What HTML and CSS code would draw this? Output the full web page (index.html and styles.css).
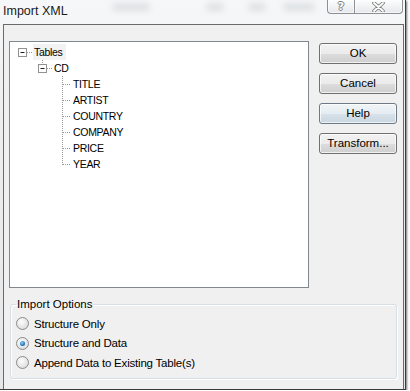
FILE: index.html
```html
<!DOCTYPE html>
<html lang="en">
  <head>
    <meta charset="UTF-8" />
    <title>Import XML</title>
    <link rel="stylesheet" href="styles.css">
  </head>
  <body>
    <div class="window">
      <div class="titlebar">
        <span class="title">Import XML</span>
        <span class="smudge s1"></span>
        <span class="smudge s2"></span>
        <span class="smudge s3"></span>
        <span class="smudge s4"></span>
        <div class="caption">
          <span class="cap cap-help">?</span>
          <span class="cap cap-close">
            <svg width="13" height="10" viewBox="0 0 13 10">
              <path d="M2 1 L11 9 M11 1 L2 9" stroke="#7d7d7d" stroke-width="3.6" stroke-linecap="round" />
              <path d="M2 1 L11 9 M11 1 L2 9" stroke="#fff" stroke-width="1.8" stroke-linecap="round" />
            </svg>
          </span>
        </div>
      </div>
      <div class="client">
        <div class="top">
          <div class="tree">
            <div class="node node-root">
              <svg width="23" height="16">
                <rect x="8.5" y="4.5" width="8" height="8" class="box" />
                <path d="M10.5 8.5 H14.5" class="minus" />
                <path d="M17 8.5 H22" class="dots" />
              </svg>
              <span class="label selected">Tables</span>
            </div>
            <div class="node">
              <svg width="43" height="16">
                <path d="M32.5 0 V4" class="dots" />
                <rect x="28.5" y="4.5" width="8" height="8" class="box" />
                <path d="M30.5 8.5 H34.5" class="minus" />
                <path d="M37 8.5 H42" class="dots" />
              </svg>
              <span class="label">CD</span>
            </div>
            <div class="node">
              <svg width="62" height="16"><path d="M52.5 0 V16 M53 8.5 H61" class="dots" /></svg>
              <span class="label">TITLE</span>
            </div>
            <div class="node">
              <svg width="62" height="16"><path d="M52.5 0 V16 M53 8.5 H61" class="dots" /></svg>
              <span class="label">ARTIST</span>
            </div>
            <div class="node">
              <svg width="62" height="16"><path d="M52.5 0 V16 M53 8.5 H61" class="dots" /></svg>
              <span class="label">COUNTRY</span>
            </div>
            <div class="node">
              <svg width="62" height="16"><path d="M52.5 0 V16 M53 8.5 H61" class="dots" /></svg>
              <span class="label">COMPANY</span>
            </div>
            <div class="node">
              <svg width="62" height="16"><path d="M52.5 0 V16 M53 8.5 H61" class="dots" /></svg>
              <span class="label">PRICE</span>
            </div>
            <div class="node">
              <svg width="62" height="16"><path d="M52.5 0 V9 M53 8.5 H61" class="dots" /></svg>
              <span class="label">YEAR</span>
            </div>
          </div>
          <div class="buttons">
            <div class="btn">OK</div>
            <div class="btn">Cancel</div>
            <div class="btn btn-hot">Help</div>
            <div class="btn">Transform...</div>
          </div>
        </div>
        <fieldset class="options">
          <legend>Import Options</legend>
          <div class="radio"><span class="circle"></span>Structure Only</div>
          <div class="radio"><span class="circle checked"></span>Structure and Data</div>
          <div class="radio"><span class="circle"></span>Append Data to Existing Table(s)</div>
        </fieldset>
      </div>
    </div>
  </body>
</html>
```

FILE: styles.css
```css
body {
  margin: 0;
  background-color: #fff;
  font-family: "Liberation Sans", Arial, sans-serif;
  font-size: 11px;
  color: #000;
}

.window {
  width: 405px;
  height: 389px;
  background: linear-gradient(180deg, #f6f7f8 0%, #eceef0 30%, #e4e6e8 100%);
  border-right: 1px solid #3c3c3c;
  border-bottom: 1px solid #3c3c3c;
  box-shadow: 1px 1px 2px rgba(0, 0, 0, 0.55);
  display: flex;
  flex-direction: column;
}

/* title bar */
.titlebar {
  height: 24px;
  display: flex;
  align-items: flex-start;
}
.title {
  margin: 4px 0 0 3px;
  font-size: 12.5px;
  line-height: 15px;
  color: #1a1a1a;
  text-shadow: 0 0 6px #fff;
}
.smudge {
  height: 8px;
  margin-top: 3px;
  border-radius: 4px;
  background-color: rgba(140, 148, 156, 0.22);
  filter: blur(3px);
}
.s1 { width: 38px; margin-left: 44px; }
.s2 { width: 18px; margin-left: 56px; }
.s3 { width: 18px; margin-left: 24px; }
.s4 { width: 32px; margin-left: 17px; }

.caption {
  margin-left: auto;
  margin-right: 2px;
  display: flex;
}
.cap {
  height: 13px;
  display: flex;
  align-items: center;
  justify-content: center;
  border: 1px solid #8d8f92;
  border-top: none;
  background: linear-gradient(180deg, rgba(255, 255, 255, 0.7), rgba(225, 228, 232, 0.8));
  box-shadow: inset 0 0 0 1px rgba(255, 255, 255, 0.6);
}
.cap-help {
  width: 26px;
  border-radius: 0 0 0 4px;
  border-right: none;
  font-family: "DejaVu Sans", sans-serif;
  font-size: 11px;
  font-weight: bold;
  color: #fff;
  text-shadow: 1px 0 0 #7d7d7d, -1px 0 0 #7d7d7d, 0 1px 0 #7d7d7d, 0 -1px 0 #7d7d7d;
}
.cap-close {
  width: 47px;
  border-radius: 0 0 4px 0;
}

/* client area */
.client {
  flex: 1;
  margin: 0 1px 0 3px;
  border: 1px solid #6a6a6a;
  border-bottom: none;
  background-color: #f0f0f0;
  padding: 16px 0 0 5px;
}

.top {
  display: flex;
  gap: 10px;
}

.tree {
  width: 298px;
  height: 243px;
  border: 1px solid #828790;
  background-color: #fff;
  padding-top: 2px;
}
.node {
  height: 16px;
  display: flex;
  align-items: center;
}
.node svg {
  flex: none;
  display: block;
}
.label {
  font-size: 10.5px;
  letter-spacing: -0.3px;
  line-height: 16px;
  padding: 0 1px;
}
.selected {
  background-color: #f2f2f2;
  padding: 0 3px 0 1px;
}
.box {
  fill: #fff;
  stroke: #919191;
  stroke-width: 1;
}
.minus {
  stroke: #1e1e1e;
  stroke-width: 1;
}
.dots {
  stroke: #9a9a9a;
  stroke-width: 1;
  stroke-dasharray: 1 1;
  fill: none;
}

.buttons {
  margin-top: 2px;
  display: flex;
  flex-direction: column;
  gap: 9px;
}
.btn {
  width: 76px;
  height: 19px;
  line-height: 19px;
  text-align: center;
  font-size: 11.5px;
  border: 1px solid #707070;
  border-radius: 3px;
  background: linear-gradient(180deg, #f2f2f2 0%, #ebebeb 50%, #dddddd 51%, #cfcfcf 100%);
  box-shadow: inset 0 0 0 1px rgba(255, 255, 255, 0.7);
}
.btn-hot {
  background: linear-gradient(180deg, #f0f4f7 0%, #e6edf2 50%, #d8e2ea 51%, #cad6e0 100%);
  border-color: #6e7a86;
}

/* import options */
.options {
  margin: 8px 0 0 1px;
  width: 374px;
  padding: 0 6px 5px 5px;
  border: 1px solid #d5dfe5;
  border-radius: 3px;
  box-shadow: inset 1px 1px 0 #fff, 1px 1px 0 #fff;
}
.options legend {
  padding: 0 1px;
  line-height: 16px;
  font-size: 11.5px;
}
.radio {
  height: 19.5px;
  display: flex;
  align-items: center;
  gap: 5px;
  font-size: 11.5px;
  letter-spacing: -0.2px;
}
.options legend + .radio {
  margin-top: 2px;
}
.circle {
  width: 11px;
  height: 11px;
  border: 1px solid #8b8b8b;
  border-radius: 50%;
  background: radial-gradient(circle at 40% 35%, #fdfdfd 0%, #e6e6e6 55%, #d2d2d2 100%);
  display: flex;
  align-items: center;
  justify-content: center;
}
.checked::after {
  content: "";
  width: 5px;
  height: 5px;
  border-radius: 50%;
  background: radial-gradient(circle at 40% 35%, #8fd0f5 0%, #2a7fc2 55%, #13466f 100%);
}
```
